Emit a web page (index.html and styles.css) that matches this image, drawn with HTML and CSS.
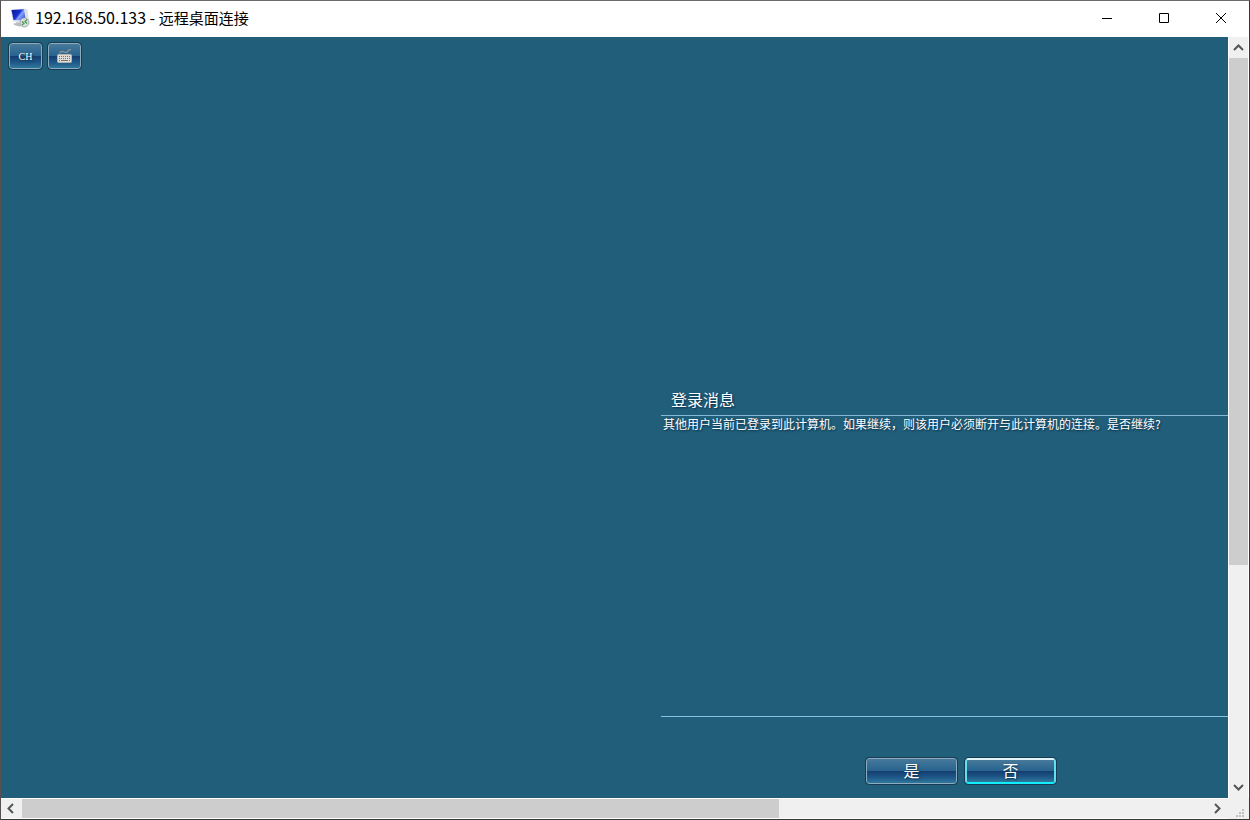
FILE: index.html
```html
<!DOCTYPE html>
<html lang="zh-CN">
<head>
<meta charset="utf-8">
<title>192.168.50.133 - 远程桌面连接</title>
<link rel="stylesheet" href="styles.css">
</head>
<body>
<div class="window">
  <header class="titlebar">
    <svg class="app-icon" viewBox="0 0 20 20" aria-hidden="true">
      <defs>
        <linearGradient id="screen" x1="0" y1=".2" x2="1" y2=".8">
          <stop offset="0" stop-color="#0d1f9c"/>
          <stop offset=".45" stop-color="#1730cf"/>
          <stop offset=".6" stop-color="#8aa5fb"/>
          <stop offset="1" stop-color="#2743dd"/>
        </linearGradient>
      </defs>
      <path d="M6 14l6 1 1 3-4 .500-5-1.500-.500-1.500 3-.500z" fill="#b9bdc4"/>
      <path d="M.500 1.500l14.500-1 2.500 1 1.500 11.500-3 1.500L3 13.500z" fill="#dce1e9"/>
      <path d="M1.500 2l12.500-.700 1.800 11.200L3.500 12z" fill="url(#screen)"/>
      <circle cx="14.500" cy="14.500" r="4.500" fill="#d9dcdd" stroke="#a6abac"/>
      <path d="M12 13.500l2 1.700-2 2M17 11.500l-2 2 2 2" fill="none" stroke="#3f9a4c" stroke-width="1.200"/>
    </svg>
    <h1 class="title"><span class="address">192.168.50.133 - </span>远程桌面连接</h1>
    <button class="caption minimize" aria-label="最小化"><svg viewBox="0 0 12 12"><path d="M1 6.500h10"/></svg></button>
    <button class="caption" aria-label="最大化"><svg viewBox="0 0 12 12"><path d="M1.500 1.500h9v9h-9z"/></svg></button>
    <button class="caption" aria-label="关闭"><svg viewBox="0 0 12 12"><path d="M1 1l10 10M11 1L1 11"/></svg></button>
  </header>

  <main class="viewport">
    <div class="desktop">
      <div class="langbar">
        <button class="glass lang">CH</button>
        <button class="glass lang" aria-label="键盘">
          <svg class="keyboard" viewBox="0 0 16 14">
            <path d="M2.500 4.500c1-2 3-2.500 5-1.500s3 .500 3.500-1 1-1.500 3-1.500" fill="none" stroke="#8f9290" stroke-width="1.300"/>
            <rect x=".5" y="5.500" width="14" height="8" rx="1" fill="#dedcd6" stroke="#b3b1ac"/>
            <path d="M2 7.500h11M2 9.500h11" stroke="#77746f" stroke-dasharray="1 1"/>
            <path d="M2 11.500h1M4 11.500h7M12 11.500h1" stroke="#77746f"/>
          </svg>
        </button>
      </div>
      <section class="dialog">
        <h2 class="heading">登录消息</h2>
        <p class="message">其他用户当前已登录到此计算机。如果继续，则该用户必须断开与此计算机的连接。是否继续?</p>
        <div class="actions">
          <button class="glass answer">是</button>
          <button class="glass answer default">否</button>
        </div>
      </section>
    </div>
  </main>

  <div class="scroll vertical">
    <button class="arrow" aria-label="向上滚动"><svg viewBox="0 0 11 11"><path d="M1 8l4.500-4.500L10 8"/></svg></button>
    <div class="track"><div class="thumb"></div></div>
    <button class="arrow" aria-label="向下滚动"><svg viewBox="0 0 11 11"><path d="M1 3l4.500 4.500L10 3"/></svg></button>
  </div>
  <div class="scroll horizontal">
    <button class="arrow" aria-label="向左滚动"><svg viewBox="0 0 11 11"><path d="M7 1L2.500 5.500 7 10"/></svg></button>
    <div class="track"><div class="thumb"></div></div>
    <button class="arrow" aria-label="向右滚动"><svg viewBox="0 0 11 11"><path d="M3 1l4.500 4.500L3 10"/></svg></button>
  </div>
  <div class="corner">
    <svg viewBox="0 0 8 8"><path d="M6 0h2v2H6zM3 3h2v2H3zM6 3h2v2H6zM0 6h2v2H0zM3 6h2v2H3zM6 6h2v2H6z"/></svg>
  </div>
</div>
</body>
</html>
```
FILE: styles.css
```css
* {
  box-sizing: border-box;
}

body {
  margin: 0;
  font-family: "Noto Sans CJK SC", sans-serif;
}

button {
  margin: 0;
  padding: 0;
  border: 0;
  background: none;
  font: inherit;
  color: inherit;
}

.window {
  display: grid;
  grid-template-columns: minmax(0, 1fr) 21px;
  grid-template-rows: 36px minmax(0, 1fr) 21px;
  height: 100vh;
  border: 1px solid #39393b;
  border-top-color: #6b6b6b;
  border-left-color: #56514f;
  background: #fff;
}

.titlebar {
  grid-column: 1 / -1;
  display: flex;
  align-items: center;
  padding: 0 0 2px 9px;
  background: #fff;
}

.app-icon {
  width: 20px;
  height: 20px;
}

.title {
  flex: 1;
  margin: 0 0 0 5px;
  padding-bottom: 2px;
  font-size: 15px;
  font-weight: 400;
  line-height: 20px;
  color: #000;
}

.address {
  font-size: 16px;
}

.caption {
  display: flex;
  align-items: center;
  justify-content: center;
  width: 57px;
  height: 34px;
}

.minimize {
  width: 56px;
}

.caption svg {
  width: 12px;
  height: 12px;
  fill: none;
  stroke: #000;
}

.viewport {
  overflow: hidden;
  background: #205e7a;
}

.desktop {
  display: flex;
  flex-direction: column;
  width: 1920px;
  padding: 5px 7px;
}

.langbar {
  display: flex;
  gap: 4px;
}

.glass {
  display: flex;
  align-items: center;
  justify-content: center;
  border: 1px solid #8eabc0;
  border-radius: 3px;
  outline: 1px solid #173b52;
  outline-offset: 0;
  background: linear-gradient(#47799a, #286490 48%, #153f71 52%, #1d5686 75%, #2f789d);
  color: #fff;
  text-shadow: 1px 1px 2px #0b2c45;
}

.lang {
  width: 33px;
  height: 26px;
  margin: 1px;
  font-family: "Liberation Serif", serif;
  font-size: 10px;
}

.keyboard {
  width: 16px;
  height: 14px;
}

.dialog {
  align-self: center;
  width: 600px;
  margin-top: 318px;
  color: #fff;
  text-shadow: 1px 1px 2px #0b2c45;
}

.heading {
  margin: 0;
  padding: 0 10px 4px;
  border-bottom: 1px solid #86b9d6;
  font-size: 16px;
  font-weight: 400;
  line-height: 23px;
}

.message {
  height: 301px;
  margin: 0;
  padding: 0 2px;
  border-bottom: 1px solid #86c2df;
  font-size: 12px;
  line-height: 16px;
}

.actions {
  display: flex;
  justify-content: center;
  gap: 8px;
  padding-top: 41px;
}

.answer {
  width: 91px;
  height: 26px;
  padding-bottom: 2px;
  font-size: 16px;
  line-height: 20px;
}

.default {
  border: 2px solid #22e4f4;
  border-color: #e1f2f7 #60e0ee #12edfc;
}

.scroll {
  display: flex;
  background: #f0f0f0;
}

.vertical {
  flex-direction: column;
  border: solid #fff;
  border-width: 0 1px;
}

.horizontal {
  border: solid #fff;
  border-width: 1px 0;
}

.arrow {
  display: flex;
  flex: none;
  align-items: center;
  justify-content: center;
  width: 21px;
}

.vertical .arrow {
  width: 100%;
  height: 21px;
}

.arrow svg {
  width: 11px;
  height: 11px;
  fill: none;
  stroke: #555;
  stroke-width: 2;
}

.track {
  display: flex;
  flex: 1;
}

.vertical .track {
  flex-direction: column;
}

.thumb {
  background: #cdcdcd;
}

.vertical .thumb {
  height: 70.5%;
}

.horizontal .thumb {
  width: 63.9%;
}

.corner {
  display: flex;
  align-items: flex-end;
  justify-content: flex-end;
  padding: 0 5px 2px 0;
  background: #f0f0f0;
}

.corner svg {
  width: 8px;
  height: 8px;
  fill: #bfbfbf;
}
```
